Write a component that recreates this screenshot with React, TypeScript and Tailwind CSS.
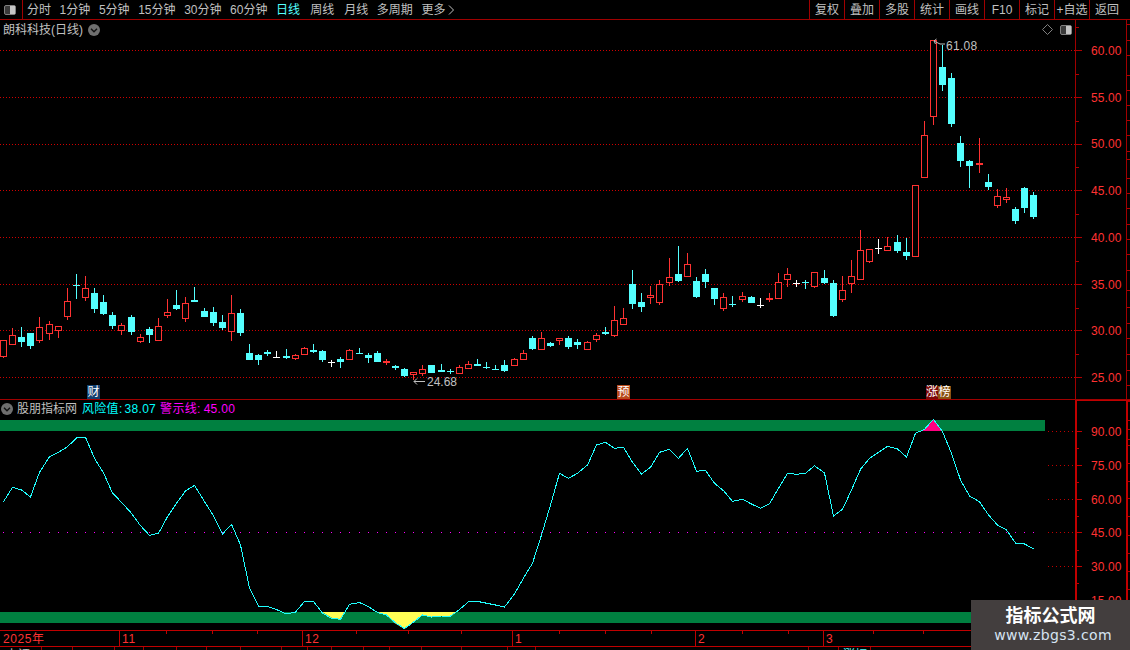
import React from "react";

type K = "r" | "c" | "w" | "f";
// kind, high, low, body top, body bottom (page pixels)
const C: [K, number, number, number, number][] = [
  ["r",340,358,340,357],["r",328,345,335,345],["c",327,347,337,342],["c",333,349,333,346],["r",317,343,327,341],
  ["r",321,340,324,334],["r",326,338,326,331],["r",288,320,301,317],["c",274,299,285,286],["r",276,301,288,298],
  ["c",288,313,293,309],["c",295,315,302,314],["c",312,329,315,326],["r",323,335,325,331],["c",315,335,317,332],
  ["r",334,343,337,342],["c",327,343,329,335],["r",318,341,326,341],["r",299,318,312,316],["c",290,310,305,309],
  ["r",297,322,303,319],["c",287,302,300,302],["c",308,317,311,317],["c",307,326,312,323],["c",315,330,322,328],
  ["r",295,341,313,332],["c",309,336,313,333],["c",344,360,353,360],["c",354,365,355,360],["c",350,356,352,354],
  ["w",351,358,357,358],["c",349,359,356,358],["r",354,360,355,359],["r",347,355,348,355],["c",344,353,350,352],
  ["c",350,362,351,360],["w",360,367,362,363],["c",357,368,359,362],["r",349,360,350,360],["c",348,354,353,354],
  ["c",353,363,355,358],["c",351,362,353,362],["f",359,365,361,363],["c",365,370,366,368],["c",368,377,369,376],
  ["r",372,380,372,375],["r",365,376,369,374],["c",365,373,365,373],["c",364,372,370,372],["c",369,374,371,372],
  ["r",365,374,367,374],["r",361,369,364,369],["c",359,366,364,366],["c",362,369,367,368],["c",365,370,369,370],
  ["c",360,372,365,371],["r",358,366,359,366],["r",350,360,353,360],["c",336,350,338,349],["r",332,350,338,350],
  ["c",342,347,343,346],["r",338,345,338,341],["c",336,349,338,347],["c",339,349,342,345],["r",341,350,342,350],
  ["r",333,342,335,340],["c",327,335,332,334],["r",306,337,320,336],["r",308,325,318,325],["c",270,309,284,304],
  ["c",293,312,302,307],["r",286,304,295,298],["r",280,305,284,303],["r",258,286,277,283],["c",246,282,274,281],
  ["r",253,277,264,277],["c",277,298,281,297],["c",269,288,274,282],["c",288,305,288,299],["r",293,311,297,309],
  ["c",296,307,304,305],["r",292,302,296,300],["c",296,303,297,303],["w",298,308,305,306],["f",293,302,298,300],
  ["r",273,299,282,299],["r",268,287,274,280],["w",280,287,283,284],["c",280,289,282,283],["r",272,288,272,287],
  ["c",270,284,278,283],["c",280,317,283,316],["r",276,302,290,300],["r",260,293,276,284],["r",230,280,250,280],
  ["r",249,263,249,262],["w",239,254,248,249],["r",237,251,246,251],["c",235,253,242,251],["c",238,260,252,256],
  ["r",185,257,185,257],["r",121,178,135,178],["r",40,125,40,117],["c",45,91,67,85],["c",73,127,78,124],
  ["c",136,167,143,161],["c",160,188,161,166],["f",138,173,163,165],["c",174,190,182,187],["r",189,208,196,206],
  ["r",188,203,197,200],["c",207,224,209,221],["c",187,213,188,208],["c",192,219,195,217],
];

const JUMPS = new Set([5, 14, 22, 31, 39, 48, 56, 64, 73, 81, 90, 98, 107]);
const XS: number[] = [];
for (let i = 0, x = 3; i < C.length; i++) {
  x += i === 0 ? 0 : JUMPS.has(i) ? 10 : 9;
  XS.push(x);
}

const LINE = [
  501.7,487.3,490,497,472.3,456.7,452.3,446.7,438,437.3,458.3,473,493,502.3,513.3,525.7,535.3,533.3,516.7,503.3,
  491,485.3,501.7,515.7,534,524.3,545,588,606.4,606.4,609.6,613.9,612.1,601.4,601.4,613.2,618.2,619.3,604.3,602.5,
  606.8,612.5,615,622.9,628.6,622,615,617.1,616,616,609.6,601.8,601.4,603.2,605,607,594,578,563.3,535,
  505,473.3,478.3,473.3,465,445,442.3,448.3,447.3,462.3,474,467.3,452.3,449.3,458.3,448.3,471.3,470.3,483.3,490.7,
  501.3,499.3,504,508.3,503.7,488.3,473.3,474.3,473.3,465.7,473,516,509.3,490,469.3,458.3,452.3,446.3,449,457,
  433.3,429.3,419.3,431.7,453.3,480,496,501.7,515,525,530,543,544,548.7,
];

const GRID = [50, 97, 144, 190, 237, 284, 330, 377];
const RED = "#ff3232";
const CYAN = "#54ffff";

function Candle({ i }: { i: number }) {
  const [k, h, l, t, b] = C[i];
  const x = XS[i];
  if (k === "w" || k === "f") {
    const col = k === "w" ? "#ffffff" : RED;
    return (
      <g fill={col}>
        <rect x={x} y={h} width={1} height={l - h} />
        <rect x={x - 3} y={t} width={7} height={Math.max(1, b - t)} />
      </g>
    );
  }
  if (k === "c") {
    return (
      <g fill={CYAN}>
        <rect x={x} y={h} width={1} height={l - h} />
        <rect x={x - 3} y={t} width={7} height={Math.max(1, b - t)} />
      </g>
    );
  }
  return (
    <g>
      {h < t && <rect x={x} y={h} width={1} height={t - h} fill={RED} />}
      {l > b && <rect x={x} y={b} width={1} height={l - b} fill={RED} />}
      <rect x={x - 2.5} y={t + 0.5} width={6} height={Math.max(1, b - t - 1)} fill="#000" stroke={RED} strokeWidth={1} />
    </g>
  );
}

function PanelIcon() {
  return (
    <div className="w-[12px] h-[10px] rounded-[2px] border border-[#808080] bg-[#3a3a3a] flex justify-end">
      <div className="w-[5px] h-full bg-[#c4c4c4]" />
    </div>
  );
}

function Chevron({ size = 12 }: { size?: number }) {
  return (
    <svg width={size} height={size} viewBox="0 0 12 12" className="shrink-0">
      <circle cx="6" cy="6" r="6" fill="#6f6f6f" />
      <polyline points="3,4.8 6,7.8 9,4.8" fill="none" stroke="#111" strokeWidth="1.4" />
    </svg>
  );
}

const LEFT = ["分时", "1分钟", "5分钟", "15分钟", "30分钟", "60分钟", "日线", "周线", "月线", "多周期"];
const RIGHT = ["复权", "叠加", "多股", "统计", "画线", "F10", "标记", "+自选", "返回"];

function Toolbar() {
  return (
    <div className="h-[20px] flex items-center border-b border-[#a00000] text-[12px] text-[#c0c0c0] leading-none">
      <div className="w-[23px] h-full flex items-center justify-center border-r border-[#a00000] pr-[2px]">
        <PanelIcon />
      </div>
      <div className="flex items-center gap-[8.6px] pl-[4px]">
        {LEFT.map((t) => (
          <span
            key={t}
            className={t === "日线" ? "text-[#54ffff]" : t === "周线" || t === "月线" ? "ml-[1.5px]" : ""}
          >
            {t}
          </span>
        ))}
        <span className="flex items-center gap-[3px]">
          更多
          <svg width="7" height="10" viewBox="0 0 7 10">
            <polyline points="1,0.5 5.5,5 1,9.5" fill="none" stroke="#c0c0c0" />
          </svg>
        </span>
      </div>
      <div className="ml-auto flex h-full pr-[6px]">
        {RIGHT.map((t) => (
          <span key={t} className="w-[35px] h-full flex items-center justify-center border-l border-[#a00000] whitespace-nowrap">
            {t}
          </span>
        ))}
      </div>
    </div>
  );
}

function UpperChart() {
  return (
    <div className="relative w-[1075px] h-full">
      <svg width={1075} height={379} viewBox="0 20 1075 379" shapeRendering="crispEdges" className="block">
        {GRID.map((y) => (
          <line key={y} x1={0} x2={1075} y1={y + 0.5} y2={y + 0.5} stroke="#d00000" strokeDasharray="1 2" />
        ))}
        {C.map((_, i) => (
          <Candle key={i} i={i} />
        ))}
        <g stroke="#c0c0c0" fill="none" shapeRendering="auto">
          <polyline points="945,44 940,44 934,41" />
          <polyline points="936.5,39 934,41 935.5,44" />
          <polyline points="425,381.5 414,381.5" />
          <polyline points="417,378.5 414,381.5 417,384.5" />
        </g>
        <g fill="#c0c0c0" fontSize="12" fontFamily="'Liberation Sans', sans-serif" shapeRendering="auto">
          <text x="946" y="50" letterSpacing="0.3">61.08</text>
          <text x="427" y="386">24.68</text>
        </g>
      </svg>
      <div className="absolute left-[3px] top-[2px] flex items-center gap-[5px] text-[12px] leading-[16px] text-[#c0c0c0]">
        <span>朗科科技(日线)</span>
        <Chevron />
      </div>
      <div className="absolute right-[3px] top-[4px] flex items-center gap-[7px]">
        <svg width="11" height="11" viewBox="0 0 11 11">
          <polygon points="5.5,0.5 10.5,5.5 5.5,10.5 0.5,5.5" fill="none" stroke="#808080" />
        </svg>
        <PanelIcon />
      </div>
      <span className="absolute left-[87px] top-[365px] w-[13px] h-[14px] bg-[#12406e] text-white text-[12px] leading-[14px] text-center">财</span>
      <span className="absolute left-[617px] top-[365px] w-[13px] h-[14px] bg-[#b84a1c] text-white text-[12px] leading-[14px] text-center">预</span>
      <span className="absolute left-[926px] top-[366px] flex text-white text-[12px] leading-[13px]">
        <span className="w-[12px] h-[13px] bg-[#7a0808] text-center">涨</span>
        <span className="w-[13px] h-[13px] bg-[#8a5212] text-center">榜</span>
      </span>
    </div>
  );
}

function Axis({ values, h, pt, text }: { values: string[]; h: string; pt: string; text?: string }) {
  return (
    <div className={`flex flex-col ${pt} pl-[15px] text-[12px] text-[#ff3232] ${text ?? ""}`}>
      {values.map((v) => (
        <span key={v} className={`${h} flex items-center leading-none tracking-[0.1px]`}>
          {v}
        </span>
      ))}
    </div>
  );
}

function UpperAxis() {
  const minors = [27, 74, 121, 167, 214, 261, 308, 354];
  const strip = [24, 40, 55, 75, 90, 105, 120, 135, 151, 159, 178, 193, 208, 224, 239, 254, 270, 290, 307, 323, 338, 354, 370, 385];
  return (
    <div className="flex h-full">
      <div className="relative w-[51px] border-l border-[#a00000]">
        <svg width={50} height={379} viewBox="0 20 50 379" shapeRendering="crispEdges" className="absolute left-0 top-0">
          {GRID.map((y) => (
            <rect key={y} x={0} y={y} width={6} height={1} fill="#b00000" />
          ))}
          {minors.map((y) => (
            <rect key={y} x={0} y={y} width={3} height={1} fill="#b00000" />
          ))}
        </svg>
        <Axis
          values={["60.00", "55.00", "50.00", "45.00", "40.00", "35.00", "30.00", "25.00"]}
          h="h-[46.75px]"
          pt="pt-[7.6px]"
        />
      </div>
      <div className="relative w-[4px] border-l border-[#a00000]">
        <svg width={3} height={379} viewBox="0 20 3 379" shapeRendering="crispEdges" className="absolute left-0 top-0">
          {strip.map((y) => (
            <rect key={y} x={0} y={y} width={3} height={1} fill="#b00000" />
          ))}
        </svg>
      </div>
    </div>
  );
}

function Indicator() {
  const pts = LINE.map((y, i) => `${XS[i] + 0.5},${y}`).join(" ");
  const band = 612;
  const top = 431;
  return (
    <div className="relative h-[230px]">
      <svg width={1075} height={230} viewBox="0 400 1075 230" shapeRendering="crispEdges" className="block">
        <rect x={0} y={420} width={1045} height={11} fill="#008040" />
        <rect x={0} y={612} width={1045} height={11} fill="#008040" />
        <polygon points={`322,${band} 332,618 340,619 345,${band}`} fill="#ffff55" shapeRendering="auto" />
        <polygon points={`377,${band} 386.5,615 394.5,623 404.5,629 413.5,622 422.5,615 430.5,617 441.5,616 451.5,616 456,${band}`} fill="#ffff55" shapeRendering="auto" />
        <polygon points={`922,${top} 925,429 933.5,419.3 942,${top}`} fill="#ff0080" shapeRendering="auto" />
        {XS.map((x) => (
          <rect key={x} x={x} y={532} width={1} height={1} fill="#ff00ff" />
        ))}
        <polyline points={pts} fill="none" stroke="#20ffff" strokeWidth={1} />
      </svg>
      <div className="absolute left-[1px] top-[1px] h-[16px] flex items-center text-[12px] leading-none">
        <Chevron />
        <span className="ml-[4px] text-[#c0c0c0]">股朋指标网</span>
        <span className="ml-[5px] text-[#00ffff] tracking-[0.3px]">风险值:</span>
        <span className="ml-[2px] text-[#00ffff] tracking-[0.3px]">38.07</span>
        <span className="ml-[4px] text-[#ff00ff] tracking-[0.3px]">警示线:</span>
        <span className="ml-[3px] text-[#ff00ff] tracking-[0.3px]">45.00</span>
      </div>
    </div>
  );
}

const MONTHS: [string, string][] = [
  ["2025年", "w-[120px] pl-[3px]"],
  ["11", "w-[183px] pl-[2px]"],
  ["12", "w-[210px] pl-[2px]"],
  ["1", "w-[183px] pl-[2px]"],
  ["2", "w-[128px] pl-[2px]"],
  ["3", "flex-1 pl-[2px]"],
];

function DateRow() {
  const ticks = [166, 212, 257, 356, 408, 461, 559, 605, 651, 742, 788, 873, 923];
  return (
    <div className="relative h-[17px] border-y border-[#c00000] flex text-[12px] text-[#ff3232] leading-[16px] tracking-[0.6px]">
      {MONTHS.map(([t, cls], i) => (
        <span key={t} className={`${cls} ${i < MONTHS.length - 1 ? "border-r border-[#c00000]" : ""}`}>
          {t}
        </span>
      ))}
      <svg width={1075} height={3} shapeRendering="crispEdges" className="absolute left-0 top-0">
        {ticks.map((x) => (
          <rect key={x} x={x} y={0} width={1} height={3} fill="#c00000" />
        ))}
      </svg>
    </div>
  );
}

function StatusRow() {
  const xs = [41, 72, 114, 143, 176, 206, 240, 281, 307, 331, 363, 389, 421, 461, 507, 535, 808, 838, 870];
  return (
    <div className="relative h-[3px] overflow-hidden text-[12px] leading-[14px]">
      <svg width={1075} height={3} shapeRendering="crispEdges" className="absolute left-0 top-0">
        {xs.map((x) => (
          <rect key={x} x={x} y={0} width={1} height={3} fill="#a00000" />
        ))}
      </svg>
      <span className="absolute left-[6px] top-[1px] text-[#c0c0c0]">上证</span>
      <span className="absolute left-[843px] top-[1px] text-[#54ffff]">涨幅</span>
    </div>
  );
}

function LowerAxis() {
  const major = [431, 465, 499, 532, 566, 600];
  const minor = [448, 482, 516, 550, 583, 617];
  const strip = [401, 420, 429, 439, 445, 463, 481, 498, 516, 535, 553, 571, 589];
  return (
    <div className="flex h-full border-t border-[#c00000]">
      <div className="relative w-[51px] border-l-2 border-[#c00000]">
        <Axis values={["90.00", "75.00", "60.00", "45.00", "30.00", "15.00"]} h="h-[33.7px]" pt="pt-[14.5px]" text="-ml-[1px]" />
        <svg width={10} height={249} viewBox="0 401 10 249" shapeRendering="crispEdges" className="absolute left-0 top-0">
          {major.map((y) => (
            <rect key={y} x={0} y={y} width={5} height={1} fill="#c00000" />
          ))}
          {minor.map((y) => (
            <rect key={y} x={0} y={y} width={2} height={1} fill="#c00000" />
          ))}
        </svg>
      </div>
      <div className="relative w-[4px] border-l-2 border-[#c00000]">
        <svg width={2} height={249} viewBox="0 401 2 249" shapeRendering="crispEdges" className="absolute left-0 top-0">
          {strip.map((y) => (
            <rect key={y} x={0} y={y} width={2} height={1} fill="#b00000" />
          ))}
        </svg>
      </div>
    </div>
  );
}

export default function App() {
  const dotted = [431, 465, 499, 532, 566, 600];
  return (
    <div className="relative w-[1130px] h-[650px] overflow-hidden bg-black font-['Liberation_Sans','Noto_Sans_CJK_SC',sans-serif]">
      <Toolbar />
      <div className="h-[380px] flex border-b border-[#a00000]">
        <UpperChart />
        <UpperAxis />
      </div>
      <div className="h-[250px] flex">
        <div className="w-[1075px] flex flex-col relative">
          <Indicator />
          <DateRow />
          <StatusRow />
          <svg width={28} height={200} viewBox="1047 420 28 200" shapeRendering="crispEdges" className="absolute left-[1047px] top-[20px]">
            {dotted.map((y) => (
              <line key={y} x1={1048} x2={1075} y1={y + 0.5} y2={y + 0.5} stroke="#c00000" strokeDasharray="1 3" />
            ))}
          </svg>
        </div>
        <LowerAxis />
      </div>
      <div className="absolute right-0 bottom-0 w-[159px] h-[50px] bg-[#433e3e] flex flex-col items-center pt-[6px]">
        <span className="text-[18px] leading-[20px] font-bold text-white">指标公式网</span>
        <span className="ml-[5px] mt-[1px] text-[14px] leading-[17px] text-[#d6e4f2] tracking-[0.35px] font-['DejaVu_Sans',sans-serif]">www.zbgs3.com</span>
      </div>
    </div>
  );
}
